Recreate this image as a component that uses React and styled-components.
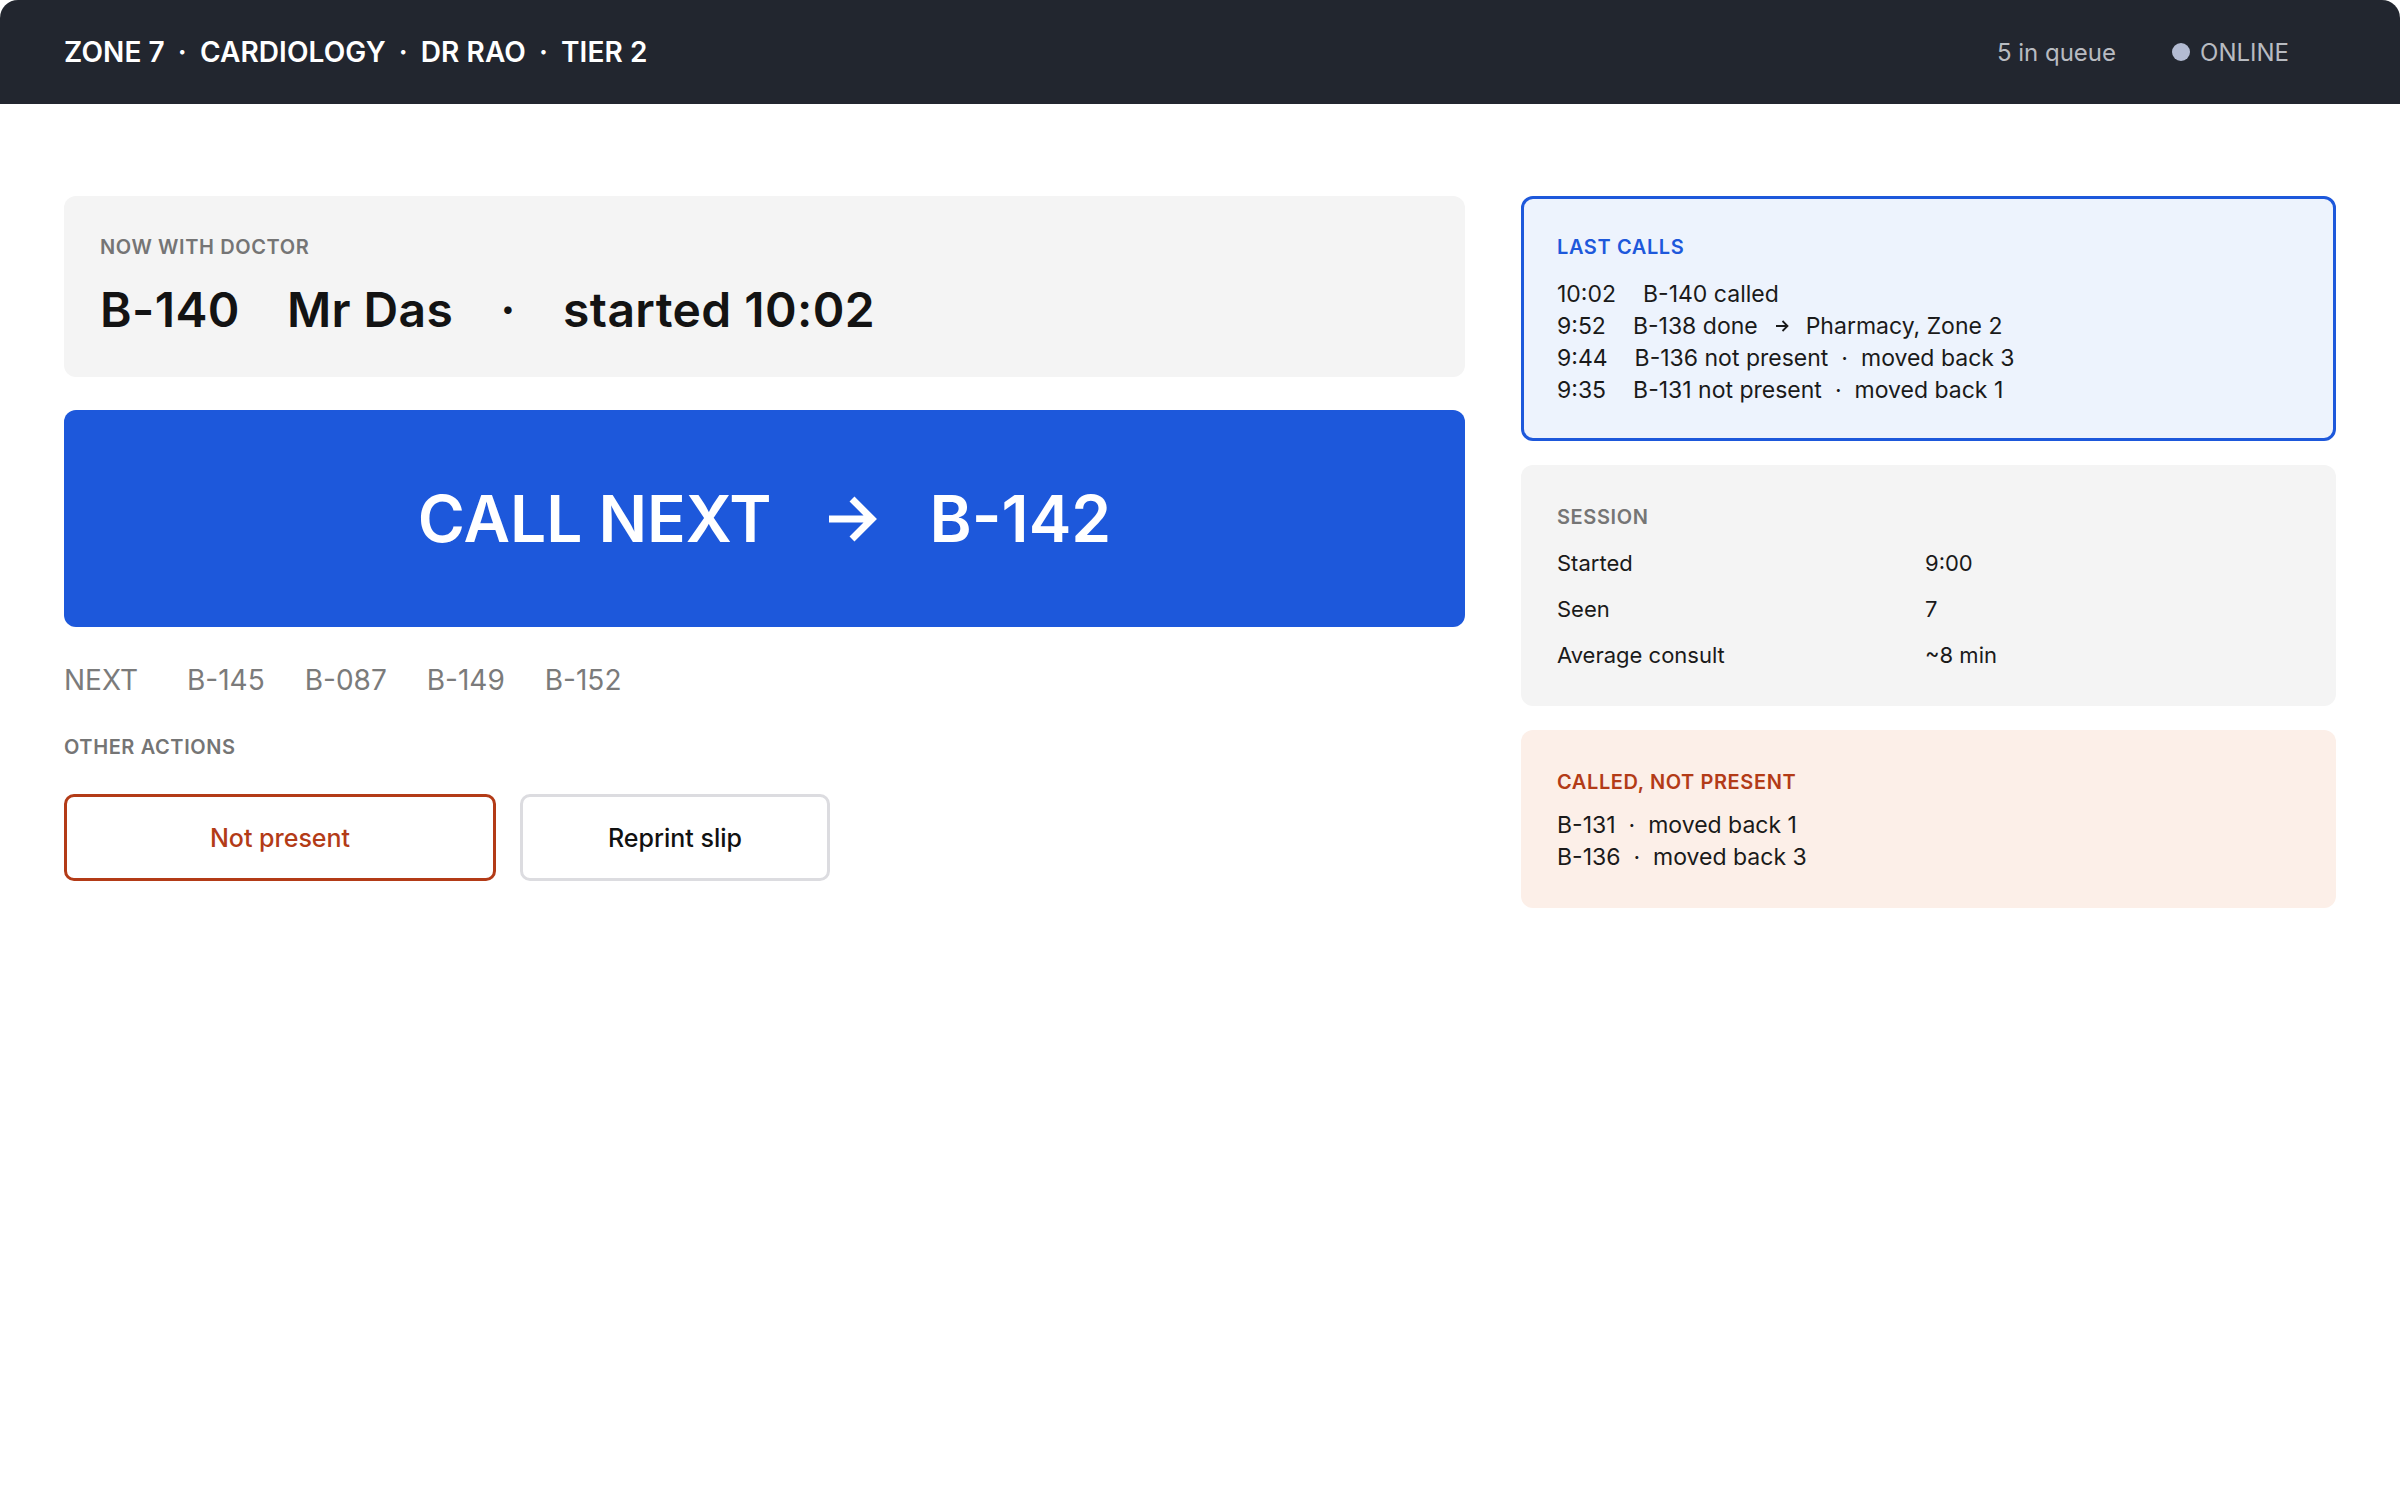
import React from "react";
import styled, { createGlobalStyle, css } from "styled-components";

const GlobalStyle = createGlobalStyle`
  * { box-sizing: border-box; }
  html, body { margin: 0; padding: 0; background: #ffffff; }
  body {
    font-family: Inter, "Noto Sans", "Liberation Sans", sans-serif;
    color: #161616;
    -webkit-font-smoothing: antialiased;
  }
`;

const Shell = styled.div`
  min-height: 100vh;
  background: #ffffff;
`;

/* ---------- top bar ---------- */

const TopBar = styled.header`
  height: 104px;
  padding: 0 111px 0 64px;
  background: #22262f;
  border-radius: 18px 18px 0 0;
  display: flex;
  align-items: center;
  justify-content: space-between;
`;

const Crumbs = styled.div`
  display: flex;
  align-items: center;
  font-size: 28px;
  font-weight: 600;
  color: #ffffff;
  letter-spacing: 0.1px;
`;

const Sep = styled.span`
  margin: 0 ${(p) => p.$space ?? 12}px;
`;

const Status = styled.div`
  display: flex;
  align-items: center;
  gap: 56px;
  font-size: 24px;
  color: #b8bbc1;
`;

const Online = styled.span`
  display: flex;
  align-items: center;
  gap: 10px;
`;

const Dot = styled.span`
  width: 18px;
  height: 18px;
  border-radius: 50%;
  background: #b3bbd2;
`;

/* ---------- layout ---------- */

const Main = styled.main`
  display: grid;
  grid-template-columns: minmax(0, 1fr) 815px;
  gap: 56px;
  padding: 92px 64px 64px;
  align-items: start;
`;

const LeftCol = styled.section`
  display: flex;
  flex-direction: column;
`;

const RightCol = styled.aside`
  display: flex;
  flex-direction: column;
  gap: 24px;
`;

const Label = styled.div`
  font-size: 20px;
  font-weight: 600;
  line-height: 24px;
  letter-spacing: 0.6px;
  color: ${(p) => p.$color || "#757575"};
  text-transform: uppercase;
`;

/* ---------- now serving ---------- */

const NowCard = styled.div`
  background: #f4f4f4;
  border-radius: 12px;
  padding: 39px 36px 38px;
`;

const NowLine = styled.div`
  margin-top: 21px;
  display: flex;
  align-items: baseline;
  gap: 47px;
  font-size: 48px;
  font-weight: 600;
  letter-spacing: 0.4px;
  color: #131313;
  line-height: 59px;
`;

const CallButton = styled.button`
  margin-top: 33px;
  height: 217px;
  width: 100%;
  border: none;
  border-radius: 12px;
  background: #1d58db;
  color: #ffffff;
  font-family: inherit;
  font-size: 64px;
  font-weight: 600;
  display: flex;
  align-items: center;
  justify-content: center;
  cursor: pointer;
`;

const CallArrow = styled.svg`
  width: 48px;
  height: 46px;
  margin: 0 53px 0 57px;
  flex: none;
`;

const UpNext = styled.div`
  margin-top: 36px;
  display: flex;
  gap: 40px;
  font-size: 28px;
  line-height: 34px;
  color: #7b7b7b;
`;

const UpNextLead = styled.span`
  margin-right: 9px;
`;

const ActionsLabel = styled(Label)`
  margin-top: 38px;
`;

const Actions = styled.div`
  margin-top: 35px;
  display: flex;
  gap: 24px;
`;

const ActionButton = styled.button`
  width: ${(p) => p.$width}px;
  height: 87px;
  border-radius: 10px;
  background: #ffffff;
  font-family: inherit;
  font-size: 25px;
  font-weight: 500;
  cursor: pointer;
  ${(p) =>
    p.$danger
      ? css`
          border: 3px solid #b33b17;
          color: #b33b17;
        `
      : css`
          border: 3px solid #dcdce0;
          color: #111111;
        `}
`;

/* ---------- side panels ---------- */

const tones = {
  info: css`
    background: #edf3fd;
    border: 3px solid #1d58db;
    padding: 36px 33px 32px;
  `,
  neutral: css`
    background: #f4f4f4;
    padding: 39.5px 36px 36.5px;
  `,
  warn: css`
    background: #fcefe8;
    padding: 39.5px 36px 35px;
  `,
};

const Panel = styled.div`
  border-radius: 12px;
  ${(p) => tones[p.$tone]}
`;

const Lines = styled.div`
  margin-top: ${(p) => p.$gap ?? 19}px;
  display: flex;
  flex-direction: column;
  font-size: 23px;
  line-height: 32px;
  color: #1a1a1a;
`;

const Line = styled.div`
  display: flex;
  align-items: center;
  white-space: nowrap;
`;

const Time = styled.span`
  margin-right: 27px;
`;

const SmallArrow = styled.svg`
  width: 13px;
  height: 12px;
  margin: 0 17px 0 18px;
  flex: none;
`;

const Stats = styled.div`
  margin-top: 19px;
  display: grid;
  grid-template-columns: 368px 1fr;
  row-gap: 16px;
  font-size: 22px;
  line-height: 30px;
  color: #1a1a1a;
`;

const upNext = ["B-145", "B-087", "B-149", "B-152"];

const lastCalls = [
  { time: "10:02", parts: ["B-140 called"] },
  { time: "9:52", parts: ["B-138 done", "→", "Pharmacy, Zone 2"] },
  { time: "9:44", parts: ["B-136 not present", "·", "moved back 3"] },
  { time: "9:35", parts: ["B-131 not present", "·", "moved back 1"] },
];

const session = [
  ["Started", "9:00"],
  ["Seen", "7"],
  ["Average consult", "~8 min"],
];

const missed = [
  ["B-131", "moved back 1"],
  ["B-136", "moved back 3"],
];

function ArrowGlyph() {
  return (
    <SmallArrow viewBox="0 0 13 12" fill="none" stroke="#1a1a1a" strokeWidth="1.8">
      <path d="M0 6h11.5M6.5 1l5 5-5 5" />
    </SmallArrow>
  );
}

export default function App() {
  return (
    <Shell>
      <GlobalStyle />
      <TopBar>
        <Crumbs>
          <span>ZONE 7</span>
          <Sep $space={13}>·</Sep>
          <span>CARDIOLOGY</span>
          <Sep $space={13}>·</Sep>
          <span>DR RAO</span>
          <Sep $space={13}>·</Sep>
          <span>TIER 2</span>
        </Crumbs>
        <Status>
          <span>5 in queue</span>
          <Online>
            <Dot />
            ONLINE
          </Online>
        </Status>
      </TopBar>

      <Main>
        <LeftCol>
          <NowCard>
            <Label>Now with doctor</Label>
            <NowLine>
              <span>B-140</span>
              <span>Mr Das</span>
              <span>·</span>
              <span>started 10:02</span>
            </NowLine>
          </NowCard>

          <CallButton>
            <span>CALL NEXT</span>
            <CallArrow viewBox="0 0 48 46" fill="none" stroke="#ffffff" strokeWidth="7">
              <path d="M0 23h43M23 3l20 20-20 20" />
            </CallArrow>
            <span>B-142</span>
          </CallButton>

          <UpNext>
            <UpNextLead>NEXT</UpNextLead>
            {upNext.map((id) => (
              <span key={id}>{id}</span>
            ))}
          </UpNext>

          <ActionsLabel>Other actions</ActionsLabel>
          <Actions>
            <ActionButton $danger $width={432}>Not present</ActionButton>
            <ActionButton $width={310}>Reprint slip</ActionButton>
          </Actions>
        </LeftCol>

        <RightCol>
          <Panel $tone="info">
            <Label $color="#1d58db">Last calls</Label>
            <Lines>
              {lastCalls.map((row) => (
                <Line key={row.time}>
                  <Time>{row.time}</Time>
                  {row.parts.map((p, i) =>
                    p === "→" ? (
                      <ArrowGlyph key={i} />
                    ) : p === "·" ? (
                      <Sep key={i} $space={13}>·</Sep>
                    ) : (
                      <span key={i}>{p}</span>
                    )
                  )}
                </Line>
              ))}
            </Lines>
          </Panel>

          <Panel $tone="neutral">
            <Label>Session</Label>
            <Stats>
              {session.map(([k, v]) => (
                <React.Fragment key={k}>
                  <span>{k}</span>
                  <span>{v}</span>
                </React.Fragment>
              ))}
            </Stats>
          </Panel>

          <Panel $tone="warn">
            <Label $color="#b33b17">Called, not present</Label>
            <Lines $gap={15}>
              {missed.map(([id, note]) => (
                <Line key={id}>
                  <span>{id}</span>
                  <Sep $space={13}>·</Sep>
                  <span>{note}</span>
                </Line>
              ))}
            </Lines>
          </Panel>
        </RightCol>
      </Main>
    </Shell>
  );
}
